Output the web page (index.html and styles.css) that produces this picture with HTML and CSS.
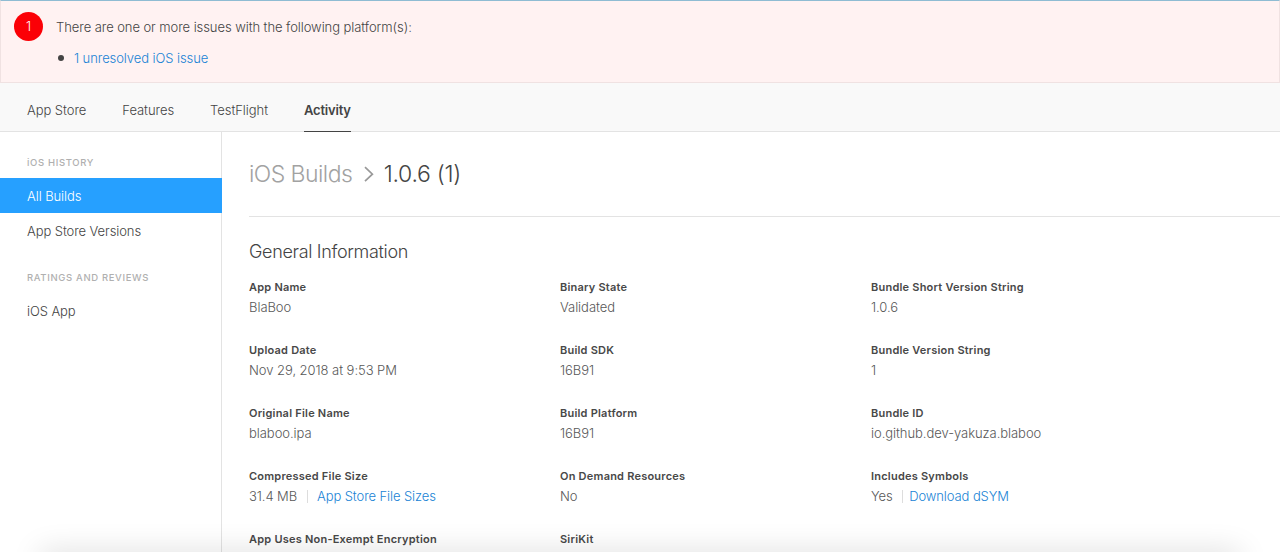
FILE: index.html
```html
<!DOCTYPE html>
<html lang="en">
<head>
<meta charset="utf-8">
<title>Activity - 1.0.6 (1)</title>
<link rel="stylesheet" href="styles.css">
</head>
<body>
<section class="alert">
  <span class="alert-badge">1</span>
  <div class="alert-body">
    <p class="alert-text">There are one or more issues with the following platform(s):</p>
    <ul class="alert-list"><li><a class="link link-issue">1 unresolved iOS issue</a></li></ul>
  </div>
</section>
<nav class="tabs">
  <a class="tab tab-store">App Store</a>
  <a class="tab tab-features">Features</a>
  <a class="tab tab-testflight">TestFlight</a>
  <a class="tab tab-active">Activity</a>
</nav>
<div class="layout">
  <aside class="sidebar">
    <h3 class="side-title side-title-history">iOS HISTORY</h3>
    <a class="side-item side-item-active">All Builds</a>
    <a class="side-item">App Store Versions</a>
    <h3 class="side-title side-title-ratings">RATINGS AND REVIEWS</h3>
    <a class="side-item">iOS App</a>
  </aside>
  <main class="content">
    <h1 class="crumbs">
      <span class="crumb-parent">iOS Builds</span>
      <svg class="crumb-arrow" width="10" height="16" viewBox="0 0 10 16"><path d="M1 1.2 8.4 8.2 1 15.2" fill="none" stroke="#999" stroke-width="1.7"/></svg>
      <span class="crumb-current">1.0.6 (1)</span>
    </h1>
    <h2 class="section-title">General Information</h2>
    <dl class="info">
      <div class="field"><dt>App Name</dt><dd>BlaBoo</dd></div>
      <div class="field"><dt>Binary State</dt><dd>Validated</dd></div>
      <div class="field"><dt>Bundle Short Version String</dt><dd>1.0.6</dd></div>
      <div class="field"><dt>Upload Date</dt><dd>Nov 29, 2018 at 9:53 PM</dd></div>
      <div class="field"><dt>Build SDK</dt><dd>16B91</dd></div>
      <div class="field"><dt>Bundle Version String</dt><dd>1</dd></div>
      <div class="field"><dt>Original File Name</dt><dd>blaboo.ipa</dd></div>
      <div class="field"><dt>Build Platform</dt><dd>16B91</dd></div>
      <div class="field"><dt>Bundle ID</dt><dd>io.github.dev-yakuza.blaboo</dd></div>
      <div class="field"><dt>Compressed File Size</dt><dd class="split split-size"><span>31.4 MB</span><a class="link">App Store File Sizes</a></dd></div>
      <div class="field"><dt>On Demand Resources</dt><dd>No</dd></div>
      <div class="field"><dt>Includes Symbols</dt><dd class="split split-symbols"><span>Yes</span><a class="link">Download dSYM</a></dd></div>
      <div class="field"><dt>App Uses Non-Exempt Encryption</dt></div>
      <div class="field"><dt>SiriKit</dt></div>
    </dl>
  </main>
</div>
<div class="window-edge"></div>
</body>
</html>
```

FILE: styles.css
```css
* { box-sizing: border-box; margin: 0; padding: 0; }
body {
  position: relative;
  display: flex;
  flex-direction: column;
  height: 552px;
  overflow: hidden;
  background: #fff;
  color: #444;
  font: 300 13px/20px Inter, "Liberation Sans", sans-serif;
  letter-spacing: -0.05px;
}
.alert {
  display: flex;
  flex: none;
  gap: 13px;
  height: 83px;
  padding: 11px 13px 0;
  background: #fff2f2;
  border: 1px solid #f0e2e2;
  border-top-color: #8fbcd3;
}
.alert-badge {
  width: 29px;
  height: 29px;
  border-radius: 50%;
  background: #fb0006;
  color: #fff;
  text-align: center;
  line-height: 29px;
}
.alert-text { margin-top: 5px; letter-spacing: -0.07px; }
.alert-list { list-style: none; margin-top: 11px; }
.alert-list li { display: flex; align-items: center; gap: 10px; padding-left: 2px; }
.alert-list li::before { content: ""; width: 6px; height: 6px; border-radius: 50%; background: #444; }
.link { color: #2083d5; }
.link-issue { letter-spacing: -0.08px; }
.tabs {
  display: flex;
  flex: none;
  gap: 36px;
  height: 49px;
  padding-left: 27px;
  background: #f9f9f9;
  border-bottom: 1px solid #e3e3e3;
}
.tab { height: 49px; padding-top: 17px; white-space: nowrap; }
.tab-active { font-weight: 600; letter-spacing: -0.2px; border-bottom: 1px solid #444; }
.layout { display: flex; flex: 1; min-height: 0; }
.sidebar { display: flex; flex-direction: column; flex: none; width: 222px; border-right: 1px solid #e3e3e3; }
.side-title { padding-left: 27px; font-size: 9.5px; font-weight: 500; line-height: 16px; letter-spacing: 0.65px; color: #b0b0b0; }
.side-title-history { margin: 23px 0 7px; }
.side-title-ratings { margin: 22px 0 7px; }
.side-item { height: 35px; padding: 8px 0 0 27px; letter-spacing: -0.08px; }
.side-item-active { margin-right: -1px; background: #26a0ff; color: #fff; }
.content { flex: 1; padding-left: 27px; }
.crumbs {
  display: flex;
  align-items: center;
  height: 85px;
  border-bottom: 1px solid #e3e3e3;
  font-size: 23px;
  font-weight: 300;
  line-height: 32px;
  letter-spacing: -0.55px;
}
.crumb-parent { color: #a2a2a2; }
.crumb-arrow { margin: 0 10px 0 11.5px; }
.crumb-current { letter-spacing: -0.3px; }
.section-title { margin-top: 22px; font-size: 18px; font-weight: 300; line-height: 26px; letter-spacing: -0.33px; }
.info {
  display: grid;
  grid-template-columns: repeat(3, 311px);
  grid-template-rows: repeat(4, 63px) 20px;
  margin-top: 12px;
}
.field dt { font-size: 11px; font-weight: 600; line-height: 20px; letter-spacing: 0.22px; color: #484848; }
.field dd { color: #585858; }
.split { display: flex; align-items: center; letter-spacing: -0.09px; }
.split .link::before { content: ""; display: inline-block; width: 1px; height: 13px; margin: 0 9.5px; background: #ddd; vertical-align: -2px; }
.split-symbols .link::before { margin-right: 6px; }
/* Soft shade along the bottom edge, fading towards both corners */
.window-edge {
  position: absolute;
  left: 0;
  right: 0;
  bottom: 0;
  height: 40px;
  overflow: hidden;
}
.window-edge::before {
  content: "";
  display: block;
  height: 20px;
  margin: 40px 40px 0;
  box-shadow: 0 0 30px 0 rgba(0, 0, 0, 0.15);
}
```
